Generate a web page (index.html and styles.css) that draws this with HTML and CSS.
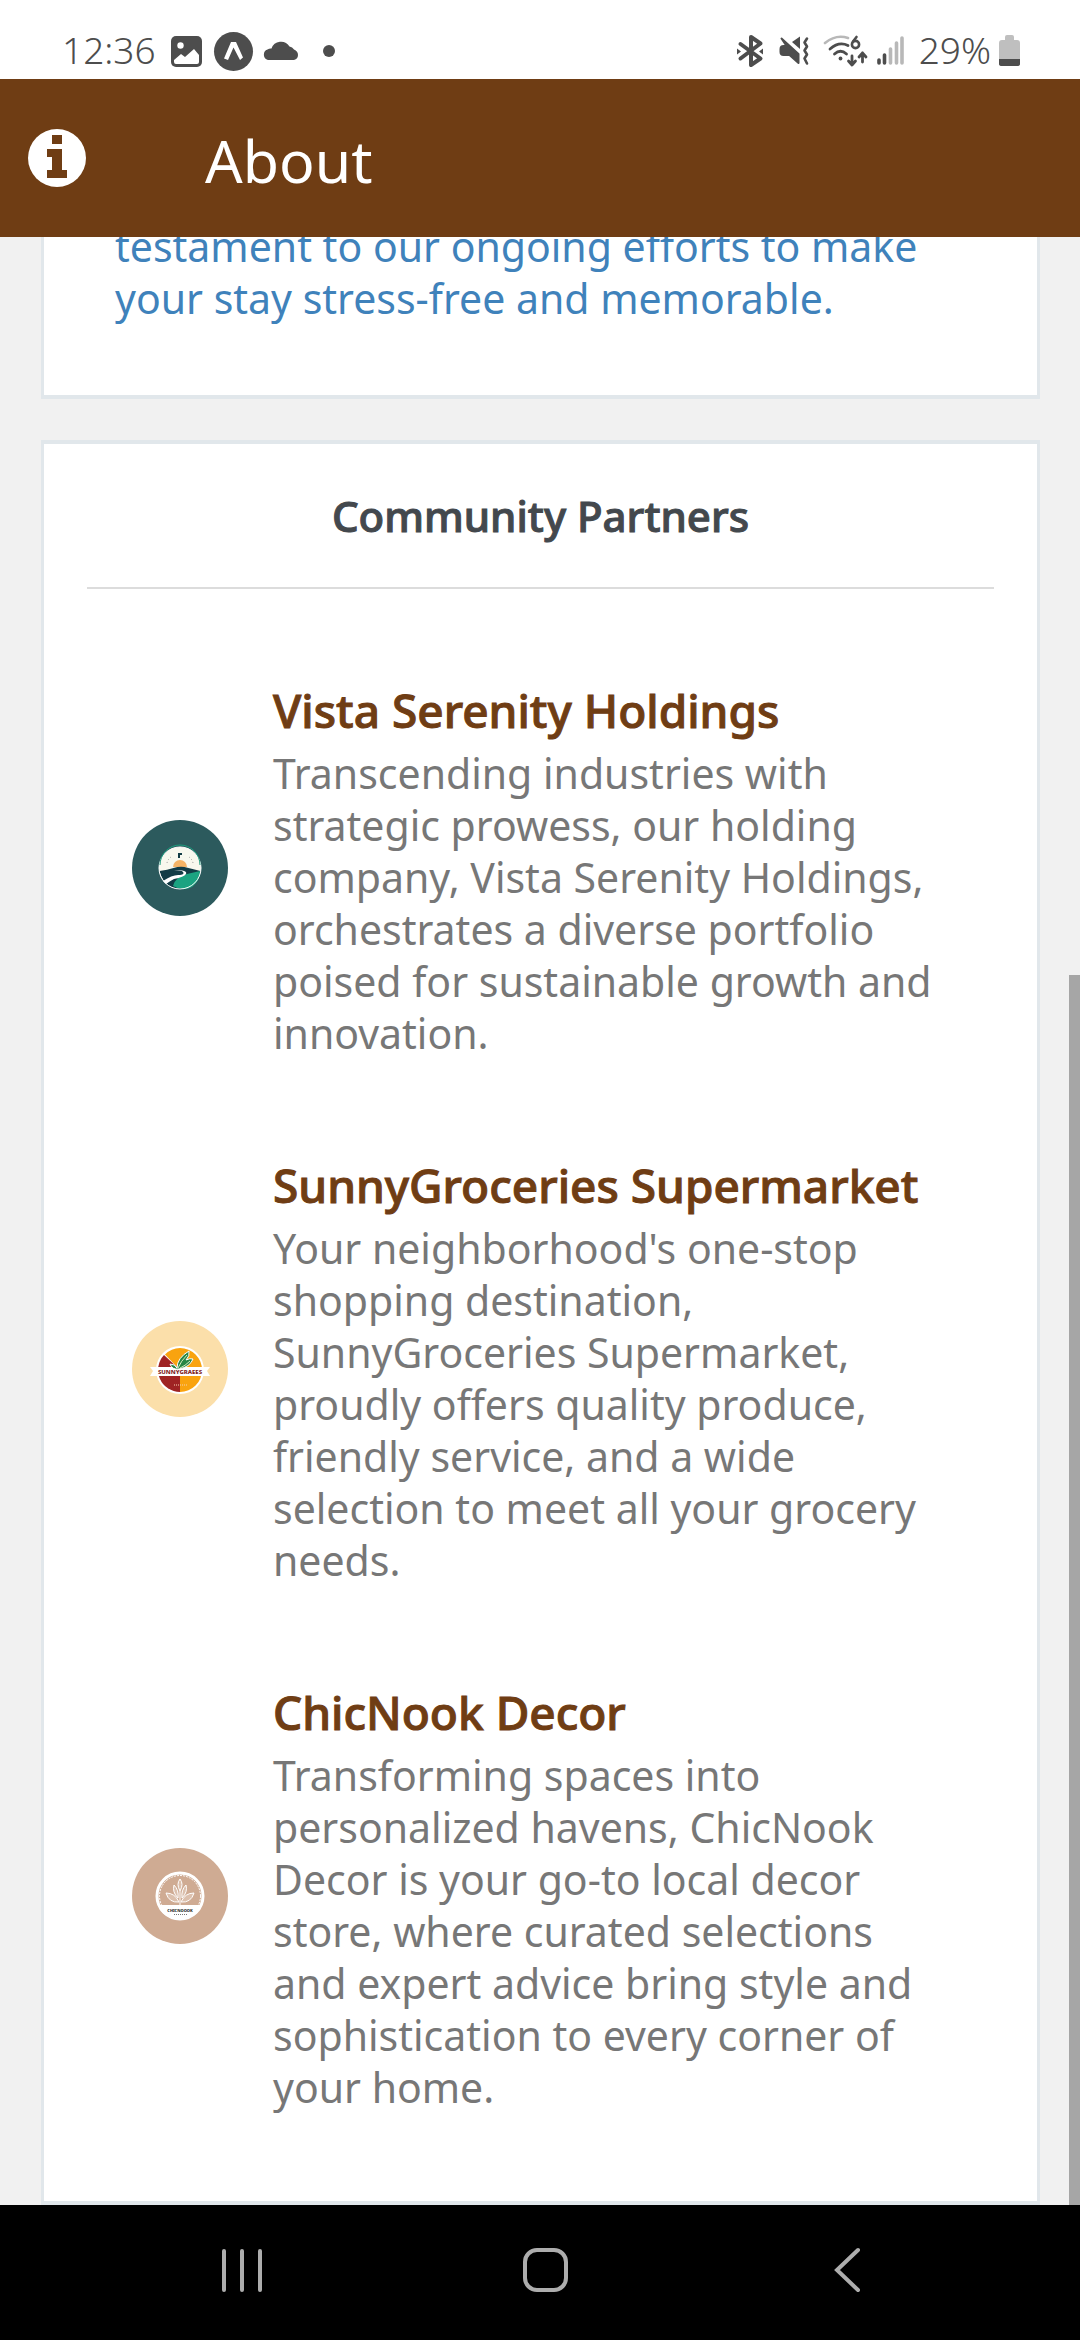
FILE: index.html
```html
<!DOCTYPE html>
<html lang="en">
<head>
<meta charset="utf-8">
<meta name="viewport" content="width=device-width, initial-scale=1">
<title>About</title>
<link rel="stylesheet" href="styles.css">
</head>
<body>
<div class="app">
  <div class="status">
    <span class="status-text">12:36</span>
    <svg class="status-left" width="168" height="42" viewBox="168 30 168 42" aria-hidden="true">
      <rect x="171" y="36" width="31" height="31" rx="5" fill="#4d4d4d"/>
      <circle cx="180.500" cy="45.500" r="3.200" fill="#fff"/>
      <path d="M174 60l7-6 4 3 9-8 5 6v7q0 2-2 2h-21q-2 0-2-2z" fill="#fff"/>
      <circle cx="233.500" cy="51.500" r="19.500" fill="#4d4d4d"/>
      <path d="M224 58.500L231 42h5l7 15.500-3 2.500-6.500-12.500L228 60z" fill="#fff"/>
      <path d="M268 60a5.500 5.500 0 0 1-.5-10.500 6 6 0 0 1 4-1 10 10 0 0 1 18-2 7 7 0 0 1 4.500 3q4 1.500 4 5.500t-4 5z" fill="#4d4d4d"/>
      <circle cx="329" cy="51" r="6" fill="#4d4d4d"/>
    </svg>
    <svg class="status-right" width="172" height="36" viewBox="733 33 172 36" fill="none" stroke="#4d4d4d" stroke-width="4" stroke-linecap="round" stroke-linejoin="round" aria-hidden="true">
      <path d="M738.500 44l20 14.500-9.500 6.500V37l9.500 6.500-20 15"/>
      <path d="M735 48.500v6l4-3zM761 48.500v6l-4-3z" fill="#4d4d4d" stroke="none"/>
      <path d="M779.500 38.500l17 15.500v9l-9-8h-6q-3 0-3-3v-3q0-3 3-3h3z" fill="#4d4d4d" stroke-width="2"/>
      <path d="M790 42l8-5.500v12.500z" fill="#4d4d4d" stroke="none"/>
      <path d="M805 38.500l-2.500 4 2.500 4-2.500 4 2.500 4-2.500 4 2.500 5" stroke-width="2.600"/>
      <path d="M823 43q11-9 23-5" stroke="#b8b8b8" stroke-width="2.600"/>
      <path d="M828 49q9-8 18-3.500M832.500 54q6-5.500 12 0" stroke-width="2.800"/>
      <circle cx="838.500" cy="58.500" r="1.900" fill="#4d4d4d" stroke="none"/>
      <path d="M854.500 37l-3.500 4.500" stroke-width="2.600"/>
      <circle cx="853.500" cy="44.500" r="3.600" stroke-width="2.600"/>
      <path d="M850 56v9m-3.500-4l3.500 4 3.500-4M860.500 62v-9m-3.500 4l3.500-4 3.500 4" stroke-width="2.800"/>
      <path d="M877 60v3M882.500 55v8" stroke-width="3.600"/>
      <path d="M888.500 49v14M894.500 43v20M900 38v25" stroke="#b8b8b8" stroke-width="3.600"/>
    </svg>
    <span class="status-text">29%</span>
    <svg class="battery" width="21" height="32" viewBox="0 0 21 32" aria-hidden="true">
      <path d="M6 5V2q0-2 2-2h5q2 0 2 2v3h3q3 0 3 3v16H0V8q0-3 3-3z" fill="#bfbfbf"/>
      <path d="M0 24h21v5q0 2-3 2H3q-3 0-3-2z" fill="#4d4d4d"/>
    </svg>
  </div>

  <header class="topbar">
    <button class="info" type="button" aria-label="Information">
      <svg width="58" height="58" viewBox="0 0 58 58" aria-hidden="true">
        <circle cx="29" cy="29" r="29" fill="#fff"/>
        <path d="M24 6h10v9H24zM19 20h15v21h5v8H19v-8h5V28h-5z" fill="#6f3d14"/>
      </svg>
    </button>
    <h1 class="title">About</h1>
  </header>

  <main class="content">
    <section class="card intro">
      <p class="intro-text">testament to our ongoing efforts to make your stay stress-free and memorable.</p>
    </section>

    <section class="card partners">
      <h2 class="card-title">Community Partners</h2>
      <ul class="list">
        <li class="partner">
          <svg class="avatar" viewBox="0 0 96 96" aria-hidden="true">
            <circle cx="48" cy="48" r="48" fill="#2c5a5d"/>
            <circle cx="48" cy="48" r="21" fill="#f8f8ee"/>
            <path d="M41 47a7 7 0 0 1 14 0z" fill="#f5b365"/>
            <path d="M46 38v-5h4v2h-2v3z" fill="#123c46"/>
            <path d="M35 43q1-4 4-6M61 43q-1-4-4-6" fill="none" stroke="#999" stroke-width="1" stroke-dasharray="1 2"/>
            <path d="M27.500 51q8-1 14-3 6-2 11-1l16 4q0 10-7 14-12 9-24 1-7-4-10-15z" fill="#123c46"/>
            <path d="M41 66q3-10 14-12l13-3q1 9-8 16-9 5-19-1z" fill="#1ba381"/>
            <path d="M31 61q10-7 17-6 6-1 2-4l-8-1q14 0 12 4-2 3-12 5-4 2-8 5z" fill="#fff"/>
            <circle cx="48" cy="48" r="21" fill="none" stroke="#fff" stroke-width="1"/>
            <path d="M28 45a20 20 0 0 1 40 0" fill="none" stroke="#1b9b7c" stroke-width="1"/>
          </svg>
          <div class="copy">
            <h3 class="name">Vista Serenity Holdings</h3>
            <p class="about">Transcending industries with strategic prowess, our holding company, Vista Serenity Holdings, orchestrates a diverse portfolio poised for sustainable growth and innovation.</p>
          </div>
        </li>
        <li class="partner">
          <svg class="avatar" viewBox="0 0 96 96" aria-hidden="true">
            <circle cx="48" cy="48" r="48" fill="#fbdfaa"/>
            <circle cx="48" cy="49" r="24" fill="#fff"/>
            <path d="M48 49L33 33.500A22 22 0 0 1 48 27a22 22 0 0 1 0 44z" fill="#f9a30f"/>
            <path d="M48 49v22a22 22 0 0 1-16-37z" fill="#9f2323"/>
            <path d="M18 46h60l-3 4 3 5H18l3-5z" fill="#fff"/>
            <path d="M38 43q5 0 7 4 0-10 12-17 1 5-3 9 4-2 7-1-3 8-14 10-7 1-9-5z" fill="#278646" stroke="#fff" stroke-width="1"/>
            <path d="M46 47q3-7 9-13M48 47q5-2 10-7" fill="none" stroke="#d4eabd" stroke-width="1"/>
            <text x="48" y="53" class="logo-sunny">SUNNYGRAEES</text>
            <path d="M42 64h13" stroke="#f6d1b0" stroke-width="1" stroke-dasharray="1 1"/>
          </svg>
          <div class="copy">
            <h3 class="name">SunnyGroceries Supermarket</h3>
            <p class="about">Your neighborhood's one-stop shopping destination, SunnyGroceries Supermarket, proudly offers quality produce, friendly service, and a wide selection to meet all your grocery needs.</p>
          </div>
        </li>
        <li class="partner">
          <svg class="avatar" viewBox="0 0 96 96" aria-hidden="true">
            <circle cx="48" cy="48" r="48" fill="#cfab93"/>
            <circle cx="48" cy="48" r="23" fill="none" stroke="#fff" stroke-width="3"/>
            <circle cx="48" cy="48" r="20.500" fill="none" stroke="#fff" stroke-width="1" stroke-dasharray="2 1"/>
            <path d="M26 57h44q-5 14-22 14T26 57z" fill="#fff"/>
            <path d="M48 31q4 5 0 12-4-7 0-12zM42 37q5 5 4 13-6-6-4-13zM54 37q-5 5-4 13 6-6 4-13zM34 45q9 0 13 9-10 1-13-9zM62 45q-9 0-13 9 10 1 13-9zM48 43v14" fill="#dcc0ad" stroke="#fff" stroke-width="1"/>
            <text x="48" y="64" class="logo-chic">CHICNOOOK</text>
            <path d="M42 66.500h13" stroke="#777" stroke-width="1" stroke-dasharray="1 1"/>
          </svg>
          <div class="copy">
            <h3 class="name">ChicNook Decor</h3>
            <p class="about">Transforming spaces into personalized havens, ChicNook Decor is your go-to local decor store, where curated selections and expert advice bring style and sophistication to every corner of your home.</p>
          </div>
        </li>
      </ul>
    </section>
    <div class="scrollbar"></div>
  </main>

  <nav class="navbar" aria-label="System">
    <button class="nav-btn" type="button" aria-label="Recent apps">
      <svg width="48" height="48" viewBox="0 0 48 48" fill="none" stroke="#adadad" stroke-width="4" stroke-linecap="round" aria-hidden="true"><path d="M6 5v39M24 5v39M42 5v39"/></svg>
    </button>
    <button class="nav-btn" type="button" aria-label="Home">
      <svg width="48" height="48" viewBox="0 0 48 48" fill="none" stroke="#adadad" stroke-width="4" aria-hidden="true"><rect x="4" y="4" width="41" height="40" rx="12"/></svg>
    </button>
    <button class="nav-btn" type="button" aria-label="Back">
      <svg width="48" height="48" viewBox="0 0 48 48" fill="none" stroke="#adadad" stroke-width="4" stroke-linecap="round" aria-hidden="true"><path d="M34 4L13 24l21 20"/></svg>
    </button>
  </nav>
</div>
</body>
</html>
```
FILE: styles.css
```css
* {
  box-sizing: border-box;
}

body {
  margin: 0;
  font-family: "Noto Sans", "Open Sans", sans-serif;
  background: #f1f1f1;
}

h1, h2, h3, p, ul {
  margin: 0;
  padding: 0;
}

svg {
  display: block;
  flex: none;
}

button {
  padding: 0;
  border: 0;
  background: none;
}

.app {
  display: flex;
  flex-direction: column;
  height: 100vh;
}

.status {
  display: flex;
  flex: none;
  align-items: center;
  height: 79px;
  padding: 23px 60px 0 62px;
  background: #fff;
}

.status-text {
  color: #4d4d4d;
  font-size: 37px;
  font-weight: 300;
  line-height: 52px;
  padding-bottom: 2px;
}

.status-left {
  margin-left: 12px;
}

.status-right {
  margin: 0 12px 0 auto;
}

.battery {
  margin-left: 8px;
}

.topbar {
  display: flex;
  flex: none;
  align-items: center;
  gap: 119px;
  height: 158px;
  padding: 0 28px;
  background: #6f3d14;
}

.title {
  padding-top: 4px;
  color: #fff;
  font-size: 59px;
  font-weight: 400;
  line-height: 80px;
}

.content {
  position: relative;
  display: flex;
  flex: 1;
  flex-direction: column;
  justify-content: flex-end;
  gap: 41px;
  min-height: 0;
  padding: 0 40px 0 41px;
  overflow: hidden;
}

.card {
  flex: none;
  border: 4px solid #e1e7eb;
  border-width: 4px 3px;
  background: #fff;
}

.intro {
  padding: 71px;
}

.intro-text {
  color: #3f82bb;
  font-size: 41px;
  line-height: 52px;
}

.partners {
  padding: 42px 43px;
}

.card-title {
  padding: 0 0 41px;
  border-bottom: 2px solid #dcdcdc;
  color: #43484d;
  font-size: 42px;
  font-weight: 500;
  line-height: 60px;
  text-align: center;
  -webkit-text-stroke: 1px currentColor;
}

.list {
  padding-top: 41px;
  list-style: none;
}

.partner {
  display: flex;
  align-items: center;
  gap: 45px;
  padding: 46px 45px;
}

.avatar {
  width: 96px;
  height: 96px;
}

.copy {
  flex: 1;
  padding-top: 4px;
}

.name {
  margin-bottom: 6px;
  color: #6f3d14;
  font-size: 46px;
  font-weight: 500;
  line-height: 61px;
  -webkit-text-stroke: 1px currentColor;
}

.about {
  color: #777;
  font-size: 41px;
  line-height: 52px;
}

.logo-sunny {
  fill: #7d2020;
  font-size: 6px;
  font-weight: 800;
  text-anchor: middle;
}

.logo-chic {
  fill: #222;
  font-size: 4px;
  font-weight: 800;
  text-anchor: middle;
}

.scrollbar {
  position: absolute;
  right: 0;
  bottom: 0;
  width: 11px;
  height: 1230px;
  background: #a6a6a6;
}

.navbar {
  display: flex;
  flex: none;
  align-items: center;
  justify-content: space-between;
  height: 135px;
  padding: 0 208px 5px 218px;
  background: #000;
}
```
